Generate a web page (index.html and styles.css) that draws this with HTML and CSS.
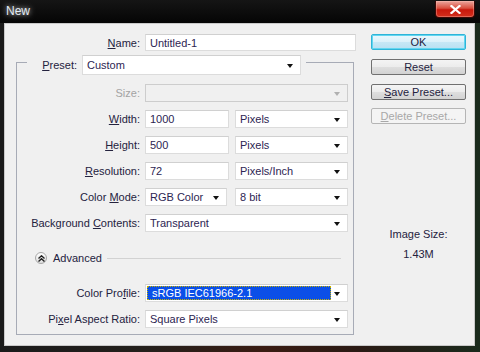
FILE: index.html
```html
<!DOCTYPE html>
<html lang="en">

<head>
    <meta charset="utf-8" />
    <title>New</title>
    <link rel="stylesheet" href="styles.css">
</head>

<body>
    <div class="window">
        <div class="titlebar">
            <span class="title">New</span>
            <span class="close">
                <svg width="11" height="9" viewBox="0 0 11 9">
                    <path d="M1.5 1 L9.5 8 M9.5 1 L1.5 8" stroke="#fff" stroke-width="2.2" stroke-linecap="square" />
                </svg>
            </span>
        </div>

        <div class="client">
            <div class="form">
                <div class="row name-row">
                    <label class="lbl"><u>N</u>ame:</label>
                    <div class="input wide">Untitled-1</div>
                </div>

                <fieldset class="group">
                    <legend class="preset">
                        <label class="lbl"><u>P</u>reset:</label>
                        <div class="select">Custom</div>
                    </legend>

                    <div class="row">
                        <label class="lbl disabled">Size:</label>
                        <div class="select full disabled"></div>
                    </div>
                    <div class="row">
                        <label class="lbl"><u>W</u>idth:</label>
                        <div class="input num">1000</div>
                        <div class="select unit">Pixels</div>
                    </div>
                    <div class="row">
                        <label class="lbl"><u>H</u>eight:</label>
                        <div class="input num">500</div>
                        <div class="select unit">Pixels</div>
                    </div>
                    <div class="row">
                        <label class="lbl"><u>R</u>esolution:</label>
                        <div class="input num">72</div>
                        <div class="select unit">Pixels/Inch</div>
                    </div>
                    <div class="row">
                        <label class="lbl">Color <u>M</u>ode:</label>
                        <div class="select mode">RGB Color</div>
                        <div class="select unit">8 bit</div>
                    </div>
                    <div class="row">
                        <label class="lbl">Background <u>C</u>ontents:</label>
                        <div class="select full">Transparent</div>
                    </div>

                    <div class="row advanced">
                        <span class="toggle">
                            <svg width="7" height="7" viewBox="0 0 7 7">
                                <path d="M0.5 3.5 L3.5 0.8 L6.5 3.5 M0.5 6.5 L3.5 3.8 L6.5 6.5" fill="none" stroke="#222" stroke-width="1.4" />
                            </svg>
                        </span>
                        <span class="adv-text">Advanced</span>
                        <span class="rule"></span>
                    </div>

                    <div class="row profile">
                        <label class="lbl">Color Pro<u>f</u>ile:</label>
                        <div class="select full focus"><span class="hl">sRGB IEC61966-2.1</span></div>
                    </div>
                    <div class="row">
                        <label class="lbl">Pi<u>x</u>el Aspect Ratio:</label>
                        <div class="select full">Square Pixels</div>
                    </div>
                </fieldset>
            </div>

            <div class="side">
                <div class="btn default">OK</div>
                <div class="btn">Reset</div>
                <div class="btn"><u>S</u>ave Preset...</div>
                <div class="btn off"><u>D</u>elete Preset...</div>

                <div class="image-size">
                    <p>Image Size:</p>
                    <p>1.43M</p>
                </div>
            </div>
        </div>
    </div>
</body>

</html>
```

FILE: styles.css
```css
*,
*::before,
*::after {
    margin: 0;
    padding: 0;
    box-sizing: border-box;
}

body {
    background: #000;
    font-family: "Liberation Sans", Arial, sans-serif;
    font-size: 11px;
    color: #24223e;
}

u {
    text-decoration-thickness: 1px;
    text-underline-offset: 1px;
}

.window {
    width: 480px;
    height: 352px;
    display: flex;
    flex-direction: column;
    background: linear-gradient(to right, #1a1a1a, #24201c 30%, #3a1c12 55%, #2a1a14 75%, #1a2a1c);
}

/* title bar */

.titlebar {
    height: 23px;
    display: flex;
    justify-content: space-between;
    align-items: flex-start;
    background: linear-gradient(to bottom, #151515, #050505);
}

.title {
    margin: 4px 0 0 6px;
    color: #e4ecf4;
    font-size: 12px;
    text-shadow: 0 0 5px rgba(255, 255, 255, .7), 0 0 10px rgba(255, 255, 255, .35);
}

.close {
    width: 40px;
    height: 17px;
    margin: 1px 5px 0 0;
    display: flex;
    justify-content: center;
    align-items: center;
    border: 1px solid #3a0806;
    border-top: none;
    border-radius: 0 0 4px 4px;
    background: linear-gradient(to bottom, #eba79e, #d9503f 45%, #c8180c 55%, #d2301e);
    box-shadow: inset 0 0 0 1px rgba(255, 200, 190, .35);
}

/* dialog body */

.client {
    width: 471px;
    height: 323px;
    margin-left: 4px;
    padding: 10px 0 0 11px;
    display: flex;
    gap: 15px;
    background: #f0f0f0;
    border: 1px solid #c9c9c9;
}

.form {
    width: 340px;
}

.row {
    height: 18px;
    display: flex;
    align-items: center;
    margin-top: 8px;
}

.group > .row:first-of-type {
    margin-top: 0;
}

.name-row {
    height: 17px;
    margin-top: 0;
    padding-left: 11px;
}

.lbl {
    width: 113px;
    flex: none;
    margin-right: 5px;
    text-align: right;
    white-space: nowrap;
}

.lbl.disabled {
    color: #a3a3a3;
}

.input,
.select {
    height: 100%;
    padding: 0 4px;
    display: flex;
    align-items: center;
    background: #fff;
    border: 1px solid #dcdcdc;
    border-top-color: #d0d0d0;
    color: #2d2552;
    white-space: nowrap;
}

.select {
    position: relative;
}

.select::after {
    content: "";
    position: absolute;
    right: 7px;
    top: 50%;
    margin-top: -1px;
    border-left: 3px solid transparent;
    border-right: 3px solid transparent;
    border-top: 4px solid #111;
}

.select.disabled {
    background: #f0f0f0;
    border-color: #cdcdcd;
}

.select.disabled::after {
    border-top-color: #b0b0b0;
}

.wide {
    width: 211px;
}

.full {
    width: 203px;
}

.num {
    width: 84px;
    margin-right: 6px;
}

.mode {
    width: 82px;
    margin-right: 8px;
}

.unit {
    width: 113px;
}

/* preset group */

.group {
    width: 338px;
    margin-top: 4px;
    padding: 15px 4px 6px 10px;
    border: 1px solid #a7abb6;
    min-inline-size: 0;
}

.preset {
    height: 14px;
    padding: 0 5px 0 0;
    display: flex;
    align-items: flex-start;
}

.preset .lbl {
    width: 50px;
    line-height: 20px;
}

.preset .select {
    width: 219px;
    height: 20px;
}

.advanced {
    margin-top: 17px;
}

.toggle {
    width: 12px;
    height: 12px;
    margin-left: 8px;
    display: flex;
    justify-content: center;
    align-items: center;
    border: 1px solid #a8a8a8;
    border-radius: 50%;
    background: linear-gradient(to bottom, #ffffff, #dedede);
}

.adv-text {
    margin-left: 6px;
}

.rule {
    flex: 1;
    height: 1px;
    margin: 0 8px 0 5px;
    background: #d2d2d2;
}

.profile {
    margin-top: 17px;
}

.select.focus {
    padding: 1px 16px 1px 1px;
}

.hl {
    flex: 1;
    height: 100%;
    padding-left: 5px;
    display: flex;
    align-items: center;
    background: #0b4fe8;
    color: #fff;
    outline: 1px dotted #c8b400;
    outline-offset: -1px;
}

/* buttons column */

.side {
    width: 95px;
    display: flex;
    flex-direction: column;
}

.btn {
    height: 16px;
    margin-top: 9px;
    display: flex;
    justify-content: center;
    align-items: center;
    border: 1px solid #707070;
    border-radius: 2px;
    background: linear-gradient(to bottom, #f4f4f4, #ececec 48%, #dedede 52%, #d2d2d2);
    color: #24223e;
}

.btn.default {
    margin-top: 0;
    border-color: #2fb4d8;
    box-shadow: inset 0 0 0 1px #62d6f0;
    background: linear-gradient(to bottom, #eaf8fd, #dcf1fa 48%, #c6e8f6 52%, #b8e0f2);
}

.btn.off {
    margin-top: 8px;
    border-color: #b5b5b5;
    background: #f4f4f4;
    color: #a8a8a8;
}

.image-size {
    margin-top: 100px;
    text-align: center;
    line-height: 20px;
}
```
